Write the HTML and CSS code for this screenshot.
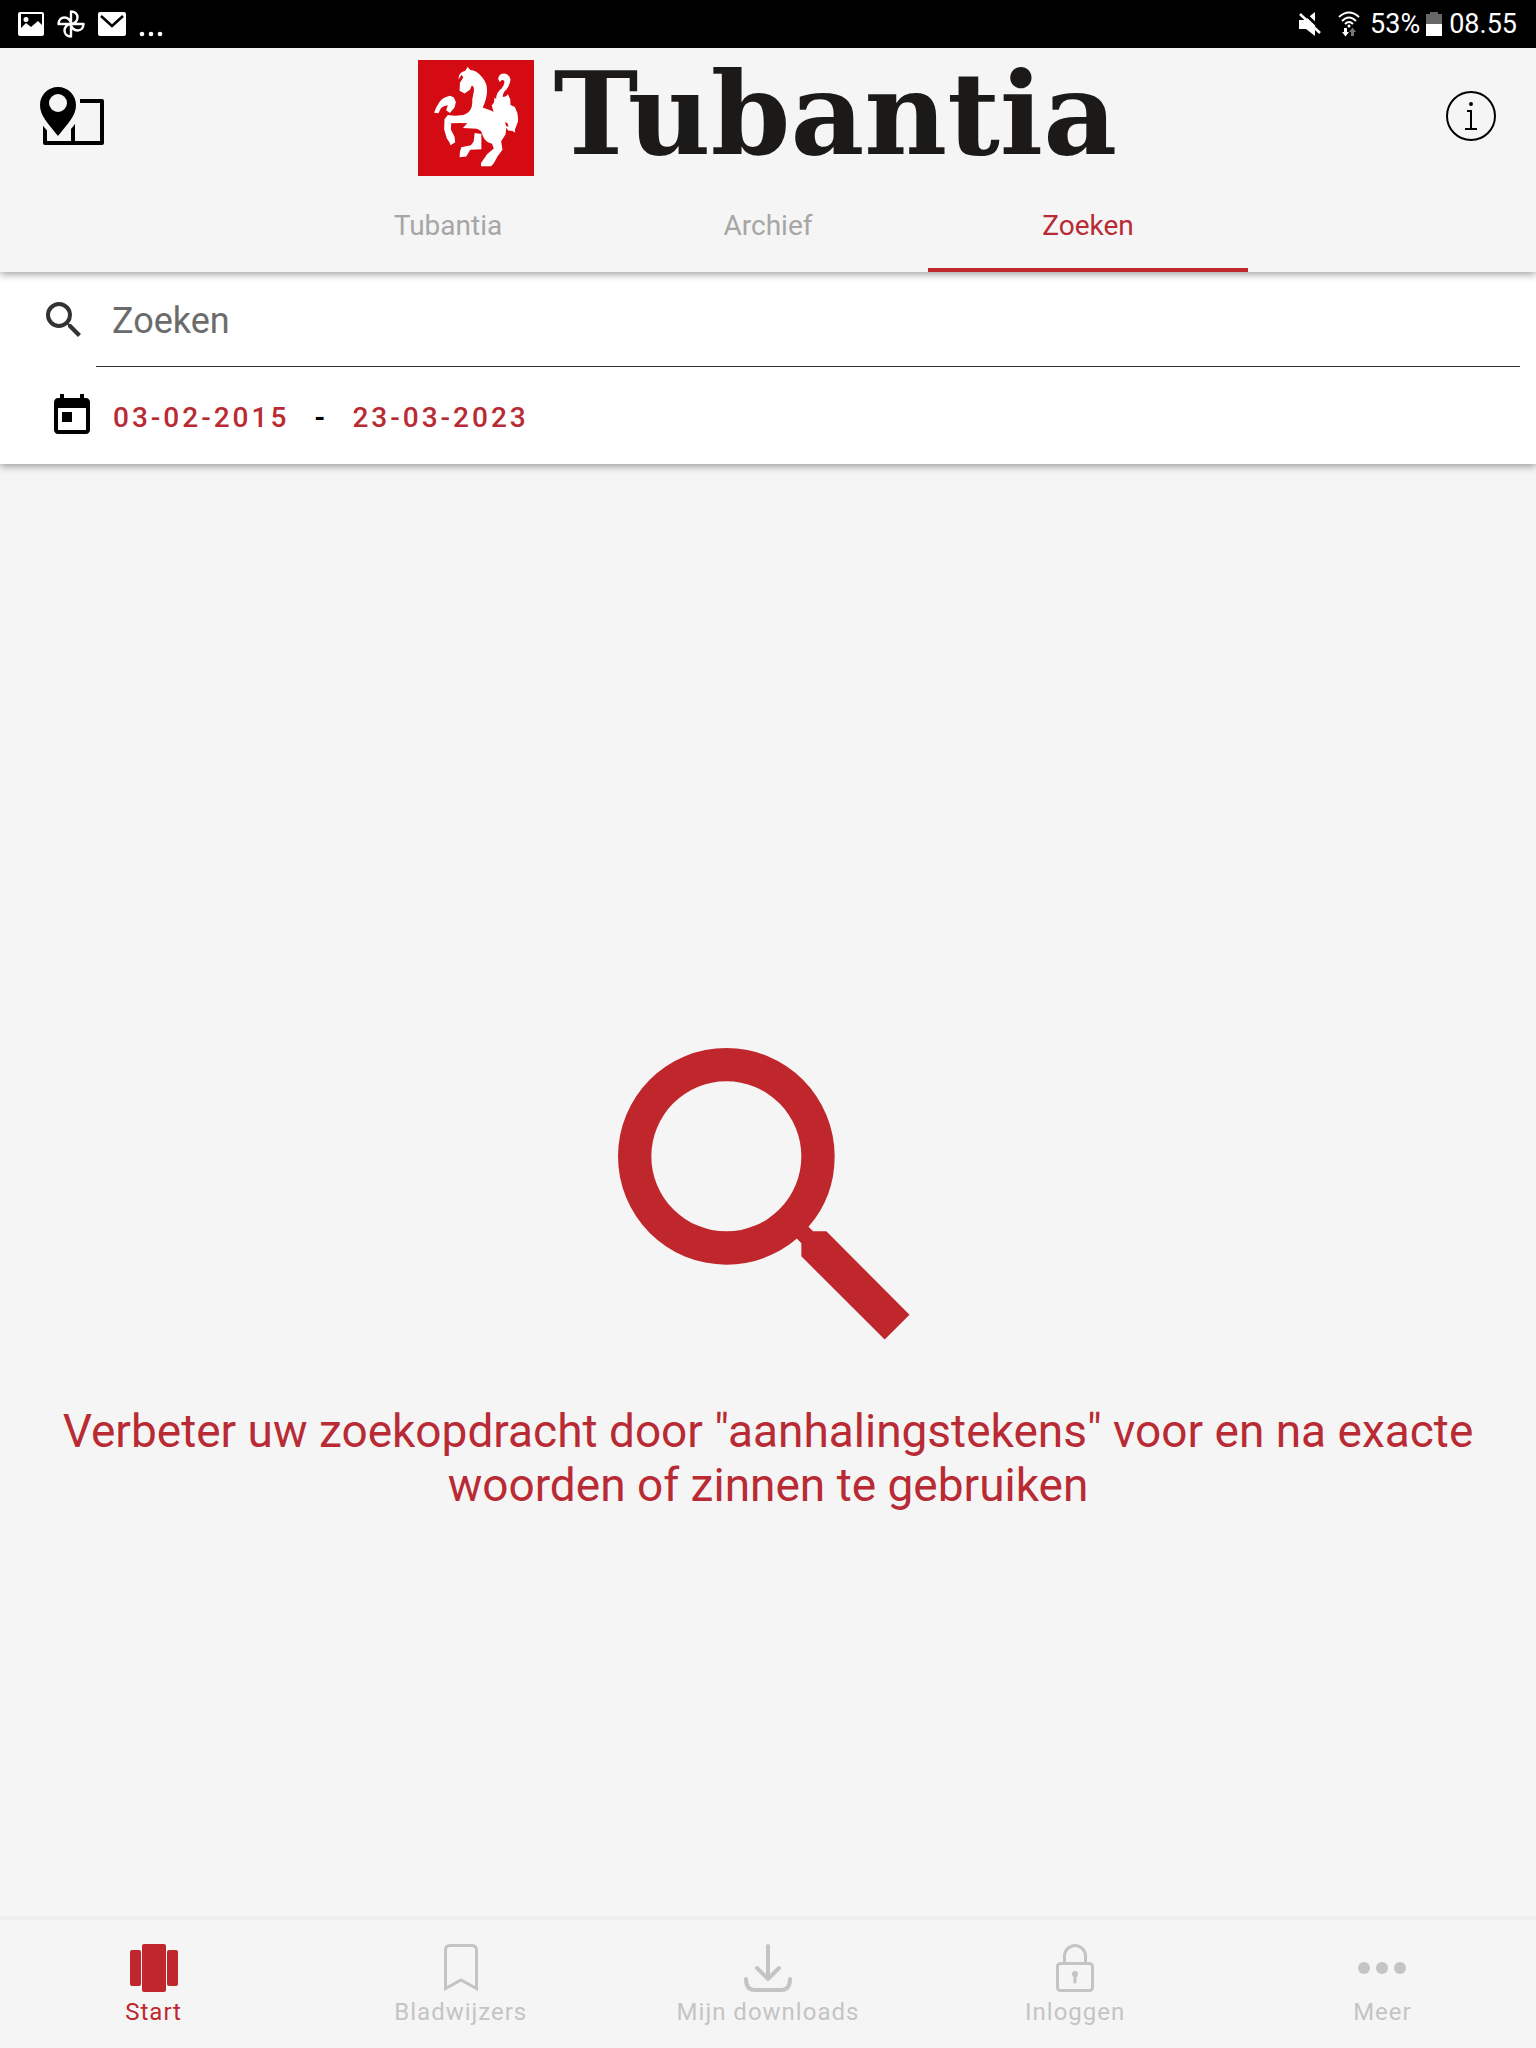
FILE: index.html
```html
<!DOCTYPE html>
<html lang="nl">
<head>
<meta charset="utf-8">
<meta name="viewport" content="width=device-width, initial-scale=1">
<title>Tubantia - Zoeken</title>
<link rel="stylesheet" href="styles.css">
</head>
<body>
<div class="status">
  <div class="status-left">
    <svg width="26" height="26" viewBox="0 0 26 26"><path fill="#fff" fill-rule="evenodd" d="M2 1h22q2 0 2 2v20q0 2-2 2H2q-2 0-2-2V3q0-2 2-2zM3 3v14l5-5 5 4 7-6 4 4V3zM8 6a2.500 2.500 0 1 1 0 5 2.500 2.500 0 0 1 0-5z"/></svg>
    <svg width="28" height="28" viewBox="0 0 28 28" fill="none" stroke="#fff" stroke-width="2.400" stroke-linejoin="round"><path d="M14 14V1.500c4 0 6.500 2.500 6.500 6 0 3-2.500 6.500-6.500 6.500zM14 14h12.500c0 4-2.500 6.500-6 6.500-3 0-6.500-2.500-6.500-6.500zM14 14v12.500c-4 0-6.500-2.500-6.500-6 0-3 2.500-6.500 6.500-6.500zM14 14H1.500c0-4 2.500-6.500 6-6.500 3 0 6.500 2.500 6.500 6.500z"/></svg>
    <svg width="28" height="26" viewBox="0 0 28 26"><rect y="1" width="28" height="24" rx="2" fill="#fff"/><path d="M3 5l11 10L25 5" fill="none" stroke="#000" stroke-width="2.500"/></svg>
    <svg width="24" height="26" viewBox="0 0 24 26" fill="#fff"><circle cx="3" cy="23" r="2.300"/><circle cx="12" cy="23" r="2.300"/><circle cx="21" cy="23" r="2.300"/></svg>
  </div>
  <div class="status-right">
    <svg class="mute" width="22" height="24" viewBox="0 0 22 24"><path fill="#fff" d="M0 8h6l10-8v24L7 17H0z"/><path d="M3 -1l20 19" stroke="#000" stroke-width="3"/><path d="M1 2l20 19" stroke="#fff" stroke-width="2.500"/></svg>
    <svg class="wifi" width="22" height="26" viewBox="0 0 22 26"><g fill="none" stroke="#fff" stroke-width="2"><path d="M1 6q10-9 20 0M4 10q7-7 14 0M7 13q4-4 8 0"/></g><circle cx="11" cy="15" r="1.500" fill="#fff"/><path d="M6 17h3v4h2l-3.500 4.500L4 21h2z" fill="#fff"/><path d="M13 25h3v-4h2l-3.500-4.500L11 21h2z" fill="#777"/></svg>
    <span>53%</span>
    <svg class="battery" width="16" height="24" viewBox="0 0 16 24"><path fill="#666" d="M4 0h8v2h4v10H0V2h4z"/><path fill="#fff" d="M0 12h16v12H0z"/></svg>
    <span>08.55</span>
  </div>
</div>
<header class="header">
  <div class="brand-row">
    <button class="icon-button" aria-label="Regio kiezen">
      <svg width="64" height="58" viewBox="0 0 64 58"><path d="M40 14h22v42H5V37M33 56V34" fill="none" stroke="#000" stroke-width="4" stroke-linejoin="round"/><path fill="#f5f5f5" d="M-3 18C-3 42 12 45 18 54 24 45 40 42 40 18z"/><path fill="#000" fill-rule="evenodd" d="M18 0c10 0 18 8 18 18 0 11-8 18-18 31C8 36 0 29 0 18 0 8 8 0 18 0zm0 7a9 9 0 1 0 0 18 9 9 0 0 0 0-18z"/></svg>
    </button>
    <h1 class="brand">
      <svg width="116" height="116" viewBox="24 30 346 346"><path fill="#d40b12" d="M24 30h346v346H24z"/><g fill="#fff"><path d="M145 88q-2-20 20-26l7-11 8 9q18 0 36 22 14 16 14 40-1 26-13 50 44 14 62 34 12 16 6 46l-13 20 4 26-14 18-12 22-8 9h-30v-10l18-26 20-17-5-14q-20-4-26-20-4-10-7-18l-12-7-42-2 13-14q-20-2-48 0l-1 18 11 22 2 16-14 9q-4-12-11-20l-8-27 1-30 10-13q22 4 38 1 16 0 28-14 8-12 7-34l5-26-1-10-5-6-6 14-16 11-15-8 1-24 10-16-5-8z"/><path d="M72 187q6-18 16-32 10-14 32-18l11 5 6 13-4 17-14 16-11-8 5-15q-16 2-21 10l-7 14zM193 248l20 3v45l-33 2-12 20-20 2q-1-14 5-30l29-6 8-11z"/><path d="M263 86q2-16 19-16 15 3 18 18-1 14-12 30-12 10-11 22l10-2 5-6 7 14 1 18 13 6q12 22 9 44l-9 24 1 9-8-5-13-2-10-13 11 1-3-9q-26-13-41-32l-6-21 7-10 1-14 5 4q0-20 17-32 10-12 7-22-8-6-13 4z"/></g></svg>
      <span class="wordmark">Tubantia</span>
    </h1>
    <button class="icon-button" aria-label="Informatie">
      <svg width="52" height="52" viewBox="0 0 52 52" fill="none" stroke="#000" stroke-width="2"><circle cx="26" cy="26" r="24"/><path d="M22 21h4v18M20 39h12"/><circle cx="26" cy="14" r="1" fill="#000"/></svg>
    </button>
  </div>
  <nav class="tabs">
    <a class="tab" href="#tubantia">Tubantia</a>
    <a class="tab" href="#archief">Archief</a>
    <a class="tab active" href="#zoeken" aria-current="page">Zoeken</a>
  </nav>
</header>
<form class="search">
  <div class="search-row">
    <label for="q" aria-label="Zoeken"><svg width="48" height="48" viewBox="0 0 24 24" fill="#333"><path d="M15.500 14h-.79l-.28-.27A6.471 6.471 0 0 0 16 9.500 6.500 6.500 0 1 0 9.500 16c1.610 0 3.090-.59 4.230-1.570l.27.28v.79l5 4.990L20.490 19l-4.990-5zm-6 0a4.500 4.500 0 1 1 0-9 4.500 4.500 0 0 1 0 9z"/></svg></label>
    <input id="q" class="search-input" type="text" placeholder="Zoeken">
  </div>
  <div class="date-row">
    <svg width="48" height="48" viewBox="0 0 24 24"><path d="M19 3h-1V1h-2v2H8V1H6v2H5c-1.110 0-1.990.9-1.990 2L3 19c0 1.100.89 2 2 2h14c1.100 0 2-.9 2-2V5c0-1.100-.9-2-2-2zm0 16H5V8h14v11zM7 10h5v5H7z"/></svg>
    <div class="dates">
      <button type="button" class="date">03-02-2015</button>
      <span class="dash">-</span>
      <button type="button" class="date">23-03-2023</button>
    </div>
  </div>
</form>
<main class="empty">
  <svg width="400" height="400" viewBox="0 0 24 24" fill="#c0272d"><path d="M15.500 14h-.79l-.28-.27A6.471 6.471 0 0 0 16 9.500 6.500 6.500 0 1 0 9.500 16c1.610 0 3.090-.59 4.230-1.570l.27.28v.79l5 4.990L20.490 19l-4.990-5zm-6 0a4.500 4.500 0 1 1 0-9 4.500 4.500 0 0 1 0 9z"/></svg>
  <p>Verbeter uw zoekopdracht door "aanhalingstekens" voor en na exacte woorden of zinnen te gebruiken</p>
</main>
<nav class="bottom">
  <a class="item active" href="#start"><svg width="48" height="48" viewBox="0 0 48 48" fill="currentColor"><rect y="6" width="11" height="36" rx="2"/><rect x="12" width="24" height="48" rx="2"/><rect x="37" y="6" width="11" height="36" rx="2"/></svg>Start</a>
  <a class="item" href="#bladwijzers"><svg width="48" height="48" viewBox="0 0 48 48" fill="none" stroke="currentColor" stroke-width="3"><path d="M8.500 44.500V6q0-4.500 4.500-4.500h22q4.500 0 4.500 4.500v38.500L24 36z"/></svg>Bladwijzers</a>
  <a class="item" href="#downloads"><svg width="48" height="48" viewBox="0 0 48 48" fill="none" stroke="currentColor" stroke-width="4" stroke-linecap="round" stroke-linejoin="round"><path d="M24 2v32M13 24l11 11 11-11M2 35q0 11 9 11h26q9 0 9-11"/></svg>Mijn downloads</a>
  <a class="item" href="#inloggen"><svg width="48" height="48" viewBox="0 0 48 48" fill="none" stroke="currentColor" stroke-width="3"><rect x="6.500" y="19.500" width="35" height="27" rx="3"/><path d="M13.500 19v-7a10.500 10.500 0 0 1 21 0v7"/><circle cx="24" cy="30" r="3" fill="currentColor" stroke="none"/><path d="M24 30v8" stroke-linecap="round"/></svg>Inloggen</a>
  <a class="item" href="#meer"><svg width="48" height="48" viewBox="0 0 48 48" fill="currentColor"><circle cx="6" cy="24" r="6"/><circle cx="24" cy="24" r="6"/><circle cx="42" cy="24" r="6"/></svg>Meer</a>
</nav>
</body>
</html>
```
FILE: styles.css
```css
* { box-sizing: border-box; }
body {
  margin: 0;
  min-height: 100vh;
  display: flex;
  flex-direction: column;
  background: #f5f5f5;
  font-family: Roboto, "Liberation Sans", sans-serif;
}
svg { display: block; flex: none; }
a { text-decoration: none; }
button { border: 0; padding: 0; background: none; font: inherit; }

.status {
  height: 48px;
  padding: 0 19px 0 18px;
  display: flex;
  align-items: center;
  justify-content: space-between;
  background: #000;
  color: #fff;
  font-size: 27px;
  line-height: 48px;
}
.status-left, .status-right { display: flex; align-items: center; }
.status-left { gap: 13px; }
.mute { margin-right: 17px; }
.wifi { margin-right: 10px; }
.battery { margin: 0 7px 0 6px; }

.header {
  position: relative;
  background: #f5f5f5;
  box-shadow: 0 2px 8px rgba(0, 0, 0, 0.4);
}
.brand-row {
  height: 136px;
  padding: 0 39px 0 40px;
  display: flex;
  align-items: center;
  justify-content: space-between;
}
.brand {
  margin: 0;
  padding-top: 4px;
  display: flex;
  align-items: center;
  gap: 20px;
}
.wordmark {
  min-width: 578px;
  padding-bottom: 8px;
  color: #1b1a18;
  font: bold 114px/108px "DejaVu Serif", serif;
}
.tabs {
  height: 88px;
  display: flex;
  justify-content: center;
}
.tab {
  width: 320px;
  padding-top: 24px;
  color: #a6a6a6;
  font-size: 28px;
  line-height: 36px;
  text-align: center;
}
.tab.active { color: #b92b34; border-bottom: 4px solid #c0272d; }

.search {
  height: 192px;
  background: #fff;
  box-shadow: 0 2px 8px rgba(0, 0, 0, 0.4);
}
.search-row {
  height: 95px;
  padding: 0 16px 0 40px;
  display: flex;
  align-items: center;
  gap: 8px;
}
.search-input {
  flex: 1;
  min-width: 0;
  height: 95px;
  border: 0;
  border-bottom: 1px solid #333;
  padding: 4px 16px 0;
  background: none;
  color: #333;
  font: 36px Roboto, sans-serif;
  outline: none;
}
.search-input::placeholder { color: #6b6b6b; }
.date-row {
  height: 97px;
  padding-left: 48px;
  display: flex;
  align-items: center;
  gap: 17px;
}
.dates {
  padding-top: 4px;
  display: flex;
  gap: 25px;
  font-size: 28px;
  font-weight: 500;
}
.date { color: #b92b34; letter-spacing: 3px; }
.dash { font-weight: 700; padding-right: 2px; }

.empty {
  flex: 1;
  padding: 130px 48px 0;
  display: flex;
  flex-direction: column;
  align-items: center;
  justify-content: center;
  gap: 6px;
}
.empty p {
  margin: 0;
  color: #b92b34;
  font-size: 46px;
  line-height: 54px;
  text-align: center;
}

.bottom {
  height: 132px;
  padding-top: 24px;
  border-top: 4px solid #eee;
  display: grid;
  grid-template-columns: repeat(5, 1fr);
}
.item {
  display: flex;
  flex-direction: column;
  align-items: center;
  gap: 4px;
  color: #c4c4c4;
  font-size: 24px;
  line-height: 32px;
  letter-spacing: 1px;
}
.item.active { color: #c0272d; }
```
